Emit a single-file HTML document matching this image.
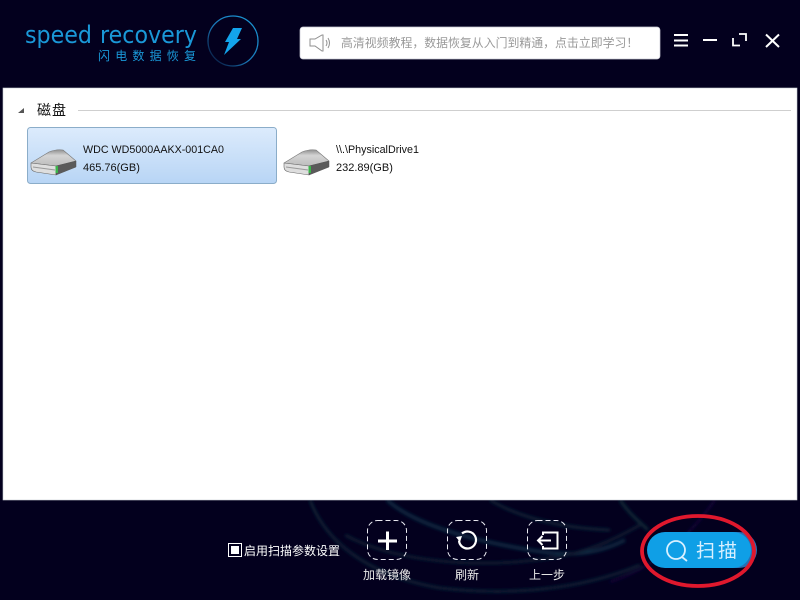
<!DOCTYPE html>
<html><head><meta charset="utf-8"><style>
html,body{margin:0;padding:0;width:800px;height:600px;overflow:hidden;background:#03001e}
svg{display:block}
text{font-family:"Liberation Sans","Noto Sans CJK SC",sans-serif}
</style></head><body>
<svg width="800" height="600" viewBox="0 0 800 600" xmlns="http://www.w3.org/2000/svg">
<defs>
<filter id="blur" x="-10%" y="-20%" width="120%" height="140%"><feGaussianBlur stdDeviation="1.600"/></filter>
<linearGradient id="sel" x1="0" y1="0" x2="0" y2="1"><stop offset="0" stop-color="#dcebfc"/><stop offset="1" stop-color="#b8d5f5"/></linearGradient>
<linearGradient id="top" x1="0" y1="0" x2="0" y2="1"><stop offset="0" stop-color="#8f8f8f"/><stop offset=".35" stop-color="#d4d4d4"/><stop offset="1" stop-color="#bcbcbc"/></linearGradient>
<linearGradient id="ring" x1="1" y1="0" x2="0" y2="1"><stop offset="0" stop-color="#1a9ad8"/><stop offset=".55" stop-color="#1a78b8"/><stop offset=".85" stop-color="#0c2a55"/><stop offset="1" stop-color="#0a1d44"/></linearGradient>
<g id="hdd" stroke-linejoin="round">
<path d="M1 14 L19 3 Q26 0 33 1 L46 12 L26 17Z" fill="url(#top)" stroke="#777" stroke-width=".6"/>
<path d="M1 14 L26 17 L26 26 L6 23 Q1 22 1 18Z" fill="#dedede" stroke="#666" stroke-width=".6"/>
<path d="M3 18 L25 21" stroke="#999" stroke-width="1" fill="none"/>
<path d="M26 17 L46 12 L46 18 L26 26Z" fill="#5a5a5a" stroke="#555" stroke-width=".5"/>
<rect x="25.500" y="17" width="2.500" height="7" fill="#3bb54a"/>
</g>
</defs>
<rect width="800" height="600" fill="#03001e"/>

<!-- background swirls -->
<g fill="none" filter="url(#blur)">
<path d="M310 500 C325 540 365 575 440 588 C510 596 580 590 640 565" stroke="#0b2034" stroke-width="3"/>
<path d="M387 500 C415 525 470 540 530 550 C560 555 590 558 625 540" stroke="#0f2a42" stroke-width="3.500"/>
<path d="M490 500 C515 515 555 528 610 530" stroke="#0c2236" stroke-width="3"/>
<path d="M345 535 C395 562 480 570 557 557 C585 552 610 542 640 525" stroke="#0b1e32" stroke-width="3"/>
<path d="M715 500 C690 535 660 565 610 582" stroke="#150e3c" stroke-width="2"/>
<path d="M620 500 C630 515 640 522 648 530" stroke="#0c2a38" stroke-width="3"/>
</g>

<!-- logo -->
<text x="25" y="43" font-size="24" fill="#1a98d8" textLength="67" lengthAdjust="spacingAndGlyphs" style="font-family:'DejaVu Sans',sans-serif">speed</text>
<text x="100" y="43" font-size="24" fill="#1a98d8" textLength="97" lengthAdjust="spacingAndGlyphs" style="font-family:'DejaVu Sans',sans-serif">recovery</text>
<text x="98" y="60" font-size="12" fill="#1a98d8" letter-spacing="5.200">闪电数据恢复</text>
<circle cx="233" cy="41" r="25" fill="none" stroke="url(#ring)" stroke-width="1.300"/>
<path d="M233 28 L242 28 L237 39 L241 39 L224 55 L229 42 L225 42Z" fill="#13a4ec"/>

<!-- notice bar -->
<rect x="300" y="27" width="360" height="32" rx="3" fill="#fff" stroke="#c9c9d4" stroke-width=".7"/>
<path d="M310 39 L315 39 L322 35 L323 35 L323 51 L322 51 L315 46 L310 46Z" fill="none" stroke="#8f8f8f" stroke-width="1"/>
<path d="M326 40 Q328 43 326 46 M328 38 Q331 43 328 48" fill="none" stroke="#8f8f8f" stroke-width="1"/>
<text x="341" y="47" font-size="11.900" fill="#999">高清视频教程，数据恢复从入门到精通，点击立即学习！</text>

<!-- window controls -->
<path d="M674 35H688 M674 40.500H688 M674 45.500H688" stroke="#fff" stroke-width="2"/>
<path d="M703 40H717" stroke="#fff" stroke-width="2"/>
<path d="M733 38V45.500H740 M739 34H746V41" fill="none" stroke="#fff" stroke-width="1.800"/>
<path d="M766 34.500L779 47 M779 34.500L766 47" stroke="#fff" stroke-width="2"/>

<!-- panel -->
<rect x="3" y="88" width="794" height="412" fill="#fff" stroke="#c8ccd4" stroke-width=".6"/>
<path d="M18 113 L24 108 L24 113Z" fill="#555"/>
<text x="37" y="115" font-size="14" fill="#111" letter-spacing="1">磁盘</text>
<rect x="78" y="110" width="713" height="1" fill="#cfcfcf"/>

<rect x="27.500" y="127.500" width="249" height="56" rx="3" fill="url(#sel)" stroke="#8badc9"/>
<use href="#hdd" x="30" y="149"/>
<text x="83" y="153" font-size="11" fill="#111" textLength="141" lengthAdjust="spacingAndGlyphs">WDC WD5000AAKX-001CA0</text>
<text x="83" y="171" font-size="11" fill="#111">465.76(GB)</text>
<use href="#hdd" x="283" y="149"/>
<text x="336" y="153" font-size="11" fill="#111" textLength="83" lengthAdjust="spacingAndGlyphs">\\.\PhysicalDrive1</text>
<text x="336" y="171" font-size="11" fill="#111">232.89(GB)</text>

<!-- bottom -->
<rect x="228.500" y="543.500" width="13" height="13" fill="none" stroke="#fff"/>
<rect x="231" y="546" width="8" height="8" fill="#fff"/>
<text x="244" y="555" font-size="12" fill="#fff">启用扫描参数设置</text>

<g fill="none" stroke="#e8e8f0" stroke-width="1" stroke-dasharray="5 3">
<rect x="367.500" y="520.500" width="39" height="39" rx="10"/>
<rect x="447.500" y="520.500" width="39" height="39" rx="10"/>
<rect x="527.500" y="520.500" width="39" height="39" rx="10"/>
</g>
<path d="M378 541H397 M387.500 531.500V550" stroke="#fff" stroke-width="3" fill="none"/>
<path d="M462 533.500 A8.500 8.500 0 1 1 459 540.500" fill="none" stroke="#fff" stroke-width="2.200"/>
<path d="M456 537 L462 536 L460 542Z" fill="#fff"/>
<path d="M543 535V532.500H557.500V548.500H543V546 M538 540.500H551 M542.500 536L538 540.500L542.500 545" fill="none" stroke="#fff" stroke-width="2"/>
<text x="387" y="579" font-size="12" fill="#e8e8e8" text-anchor="middle">加载镜像</text>
<text x="467" y="579" font-size="12" fill="#e8e8e8" text-anchor="middle">刷新</text>
<text x="547" y="579" font-size="12" fill="#e8e8e8" text-anchor="middle">上一步</text>

<!-- scan button -->
<rect x="690" y="532" width="67" height="36" rx="18" fill="#2a6fb4"/>
<rect x="647" y="532" width="104" height="36" rx="18" fill="#0f9fe6"/>
<circle cx="676" cy="550" r="9" fill="none" stroke="#d8f0ff" stroke-width="1.800"/>
<path d="M682 557L687 561" stroke="#d8f0ff" stroke-width="1.800"/>
<text x="696" y="557" font-size="19" fill="#d8f0ff" letter-spacing="3">扫描</text>
<ellipse cx="698" cy="551" rx="56" ry="35" fill="none" stroke="#e0182d" stroke-width="3.800"/>
</svg>
</body></html>
